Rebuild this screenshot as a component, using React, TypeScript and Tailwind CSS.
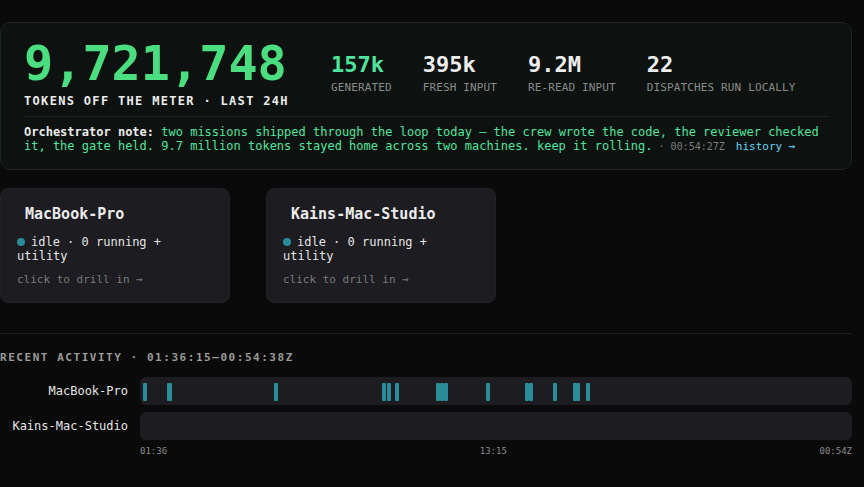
import React from "react";

const stats = [
  { value: "157k", label: "GENERATED", accent: true },
  { value: "395k", label: "FRESH INPUT" },
  { value: "9.2M", label: "RE-READ INPUT" },
  { value: "22", label: "DISPATCHES RUN LOCALLY" },
];

const machines = ["MacBook-Pro", "Kains-Mac-Studio"];

// px offsets of each dispatch inside the 712px track
const proTicks = [3, 27, 28, 134, 242, 247, 255, 296, 300, 304, 346, 385, 389, 413, 433, 436, 446];
const TRACK = 712;

const App = () => {
  return (
    <div className="min-h-screen bg-[#0a0a0a] pt-[22px] pr-3 font-['DejaVu_Sans_Mono',monospace] leading-[normal] text-[#e5e5e5]">
      {/* Hero meter */}
      <section className="rounded-[10px] border border-[#1d2420] bg-[#0d1210] px-[23px] pt-4 pb-4">
        <div className="flex items-center gap-[42px]">
          <div className="flex flex-col">
            <div className="text-[48.5px] font-bold leading-none text-[#4ade80]">9,721,748</div>
            <div className="mt-1.5 text-[12px] font-bold tracking-[0.11em] text-[#ececec]">
              TOKENS OFF THE METER · LAST 24H
            </div>
          </div>

          <div className="flex gap-[31px]">
            {stats.map((s) => (
              <div key={s.label} className="flex flex-col">
                <span
                  className={
                    s.accent
                      ? "text-[22px] font-bold text-[#4ee59f]"
                      : "text-[22px] font-bold text-[#ededed]"
                  }
                >
                  {s.value}
                </span>
                <span className="mt-1 text-[11px] tracking-[0.012em] text-[#8a8a8a]">{s.label}</span>
              </div>
            ))}
          </div>
        </div>

        <p className="mt-2 border-t border-[#1f2622] pt-2 text-[12px] text-[#4ee59f]">
          <b className="font-bold text-[#ececec]">Orchestrator note:</b> two missions shipped through the
          loop today — the crew wrote the code, the reviewer checked it, the gate held. 9.7 million tokens
          stayed home across two machines. keep it rolling.
          <span className="text-[10px] text-[#7c7c7c]"> · 00:54:27Z</span>
          <a href="#" className="ml-[11px] text-[11px] text-[#67d3f2]">
            history →
          </a>
        </p>
      </section>

      {/* Machines */}
      <section className="mt-[18px] flex gap-9">
        {machines.map((m) => (
          <div key={m} className="w-[230px] rounded-lg border border-[#202025] bg-[#1c1c21] p-4">
            <div className="pl-2 text-[15px] font-bold text-[#ececec]">{m}</div>
            <div className="mt-3 text-[12px] text-[#e5e5e5]">
              <span className="mr-1.5 inline-block h-2 w-2 rounded-full bg-[#2a8c99] align-middle" />
              idle · 0 running + utility
            </div>
            <div className="mt-2.5 text-[11px] text-[#7a7a7a]">click to drill in →</div>
          </div>
        ))}
      </section>

      {/* Recent activity */}
      <section className="mt-[30px] border-t border-[#1f1f1f] pt-[17px]">
        <h3 className="text-[11px] font-bold tracking-[0.14em] text-[#9a9a9a]">
          RECENT ACTIVITY · 01:36:15–00:54:38Z
        </h3>

        <div className="mt-[13px] flex flex-col gap-[7px]">
          {machines.map((m) => (
            <div key={m} className="flex items-center gap-3">
              <span className="w-32 shrink-0 text-right text-[12px] text-[#e5e5e5]">{m}</span>
              <div className="relative h-7 flex-1 rounded-md bg-[#1c1c21]">
                {m === "MacBook-Pro" &&
                  proTicks.map((x, i) => (
                    <span
                      key={i}
                      className="absolute top-[6px] h-[18px] w-1 rounded-[1px] bg-[#2a8c99]"
                      style={{ left: `${(x / TRACK) * 100}%` }}
                    />
                  ))}
              </div>
            </div>
          ))}
        </div>

        <div className="mt-1.5 ml-[140px] flex justify-between text-[9px] text-[#8a8a8a]">
          <span>01:36</span>
          <span>13:15</span>
          <span>00:54Z</span>
        </div>
      </section>
    </div>
  );
};

export default App;
